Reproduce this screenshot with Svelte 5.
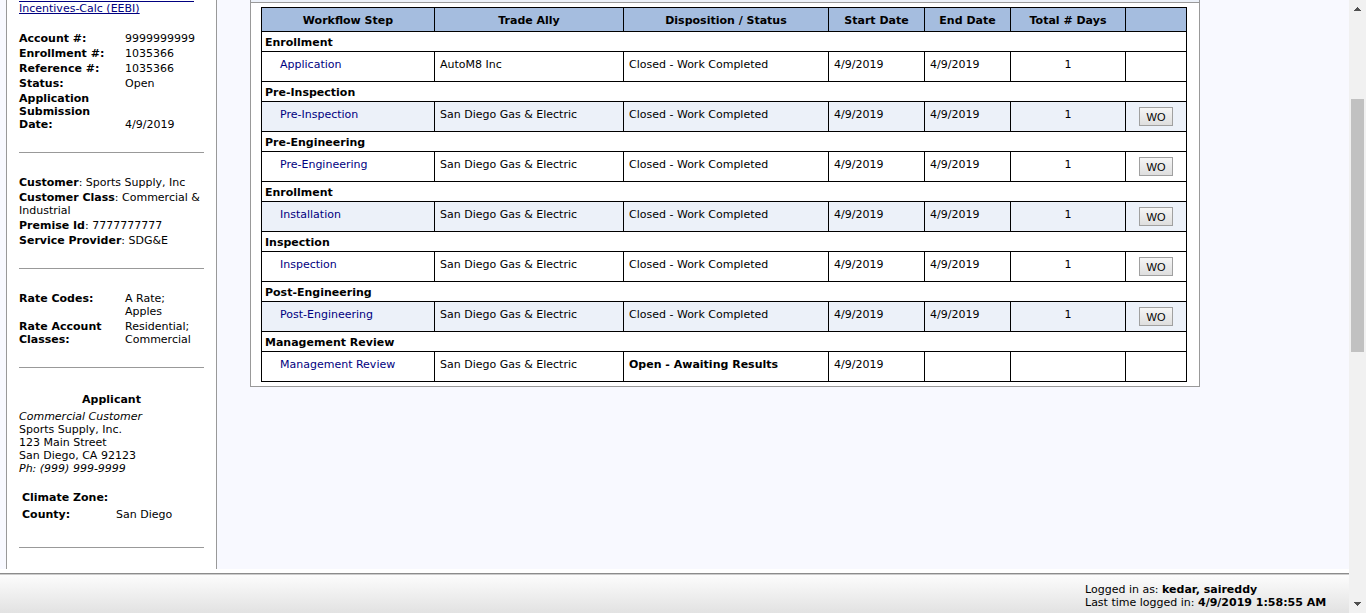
<script>
  const account = [
    ['Account #:', '9999999999'],
    ['Enrollment #:', '1035366'],
    ['Reference #:', '1035366'],
    ['Status:', 'Open'],
    ['Application Submission Date:', '4/9/2019']
  ];
  const customer = [
    ['Customer', 'Sports Supply, Inc'],
    ['Customer Class', 'Commercial & Industrial'],
    ['Premise Id', '7777777777'],
    ['Service Provider', 'SDG&E']
  ];
  const rates = [
    ['Rate Codes:', 'A Rate; Apples'],
    ['Rate Account Classes:', 'Residential; Commercial']
  ];
  const columns = [
    { title: 'Workflow Step', width: 173 },
    { title: 'Trade Ally', width: 189 },
    { title: 'Disposition / Status', width: 205 },
    { title: 'Start Date', width: 96 },
    { title: 'End Date', width: 86 },
    { title: 'Total # Days', width: 115 },
    { title: '', width: 61 }
  ];
  const utility = 'San Diego Gas & Electric';
  const done = 'Closed - Work Completed';
  const day = '4/9/2019';
  const steps = [
    { group: 'Enrollment', step: 'Application', ally: 'AutoM8 Inc', status: done, end: day, days: 1 },
    { group: 'Pre-Inspection', step: 'Pre-Inspection', ally: utility, status: done, end: day, days: 1, wo: true },
    { group: 'Pre-Engineering', step: 'Pre-Engineering', ally: utility, status: done, end: day, days: 1, wo: true },
    { group: 'Enrollment', step: 'Installation', ally: utility, status: done, end: day, days: 1, wo: true },
    { group: 'Inspection', step: 'Inspection', ally: utility, status: done, end: day, days: 1, wo: true },
    { group: 'Post-Engineering', step: 'Post-Engineering', ally: utility, status: done, end: day, days: 1, wo: true },
    { group: 'Management Review', step: 'Management Review', ally: utility, status: 'Open - Awaiting Results', open: true, end: '', days: '' }
  ];
</script>

<div class="window">
  <div class="page">
    <div class="content">
      <aside class="sidebar">
        <a class="program" href="#program">Incentives-Calc (EEBI)</a>

        <dl class="facts account">
          {#each account as [name, value]}
            <dt>{name}</dt>
            <dd>{value}</dd>
          {/each}
        </dl>
        <hr />

        <div class="customer">
          {#each customer as [name, value]}
            <p><b>{name}</b>: {value}</p>
          {/each}
        </div>
        <hr />

        <dl class="facts">
          {#each rates as [name, value]}
            <dt>{name}</dt>
            <dd>{value}</dd>
          {/each}
        </dl>
        <hr />

        <h2>Applicant</h2>
        <address>
          <i>Commercial Customer</i>
          <span>Sports Supply, Inc.</span>
          <span>123 Main Street</span>
          <span>San Diego, CA 92123</span>
          <i>Ph: (999) 999-9999</i>
        </address>
        <dl class="location">
          <dt>Climate Zone:</dt>
          <dd></dd>
          <dt>County:</dt>
          <dd>San Diego</dd>
        </dl>
        <hr />
      </aside>

      <main class="panel">
        <div class="bar"></div>
        <div class="body">
          <table>
            <colgroup>
              {#each columns as column}
                <col style:width="{column.width}px" />
              {/each}
            </colgroup>
            <thead>
              <tr>
                {#each columns as column}
                  <th scope="col">{column.title}</th>
                {/each}
              </tr>
            </thead>
            <tbody>
              {#each steps as row, i}
                <tr class="group">
                  <th colspan="7" scope="rowgroup">{row.group}</th>
                </tr>
                <tr class="step" class:shaded={i % 2 === 1}>
                  <td class="name"><a href="#step">{row.step}</a></td>
                  <td>{row.ally}</td>
                  <td class:open={row.open}>{row.status}</td>
                  <td>{day}</td>
                  <td>{row.end}</td>
                  <td class="days">{row.days}</td>
                  <td class="action">
                    {#if row.wo}<button type="button">WO</button>{/if}
                  </td>
                </tr>
              {/each}
            </tbody>
          </table>
        </div>
      </main>
    </div>

    <footer>
      <div class="login">
        <div>Logged in as: <b>kedar, saireddy</b></div>
        <div>Last time logged in: <b>4/9/2019 1:58:55 AM</b></div>
      </div>
    </footer>
  </div>

  <div class="scrollbar" aria-hidden="true">
    <svg width="17" height="17" viewBox="0 0 17 17" shape-rendering="crispEdges"><path d="M8 7h1v1h1v1h1v1h1v1H5v-1h1V9h1V8h1z" fill="#505050" /></svg>
    <div class="track"><div class="thumb"></div></div>
    <svg width="17" height="17" viewBox="0 0 17 17" shape-rendering="crispEdges"><path d="M5 6h7v1h-1v1h-1v1H9v1H8V9H7V8H6V7H5z" fill="#505050" /></svg>
  </div>
</div>

<style>
  :global(body) {
    margin: 0;
  }
  .window {
    display: flex;
    height: 100vh;
    overflow: hidden;
    color: #000;
    font: 11px/13px Verdana, "DejaVu Sans", sans-serif;
  }
  .page {
    flex: 1;
    min-width: 0;
    display: flex;
    flex-direction: column;
    background: #fff;
  }
  .content {
    flex: 1;
    min-height: 0;
    overflow: hidden;
    display: flex;
    align-items: flex-start;
    gap: 33px;
    padding-left: 6px;
    background: #f8f9ff;
  }
  a {
    color: #000080;
    text-decoration: none;
  }
  dl, dd, p, h2 {
    margin: 0;
  }
  dt {
    font-weight: bold;
  }

  .sidebar {
    box-sizing: border-box;
    flex: 0 0 211px;
    align-self: stretch;
    padding: 0 12px;
    border: solid #999;
    border-width: 0 1px;
    background: #fff;
  }
  .program {
    display: block;
    padding-top: 1px;
    text-decoration: underline;
  }
  .program::before {
    content: "";
    display: block;
    width: 175px;
    height: 1px;
    background: #000080;
  }
  .facts {
    display: grid;
    grid-template-columns: 106px 1fr;
  }
  .facts dt,
  .facts dd,
  .customer p {
    padding: 1px 0;
  }
  .account {
    align-items: end;
    margin-top: 16px;
  }
  .account dt {
    padding-right: 20px;
  }
  .sidebar hr {
    height: 1px;
    margin: 20px 0 22px;
    border: 0;
    background: #999;
  }
  h2 {
    padding-top: 3px;
    font-size: 11px;
    text-align: center;
  }
  address {
    margin-top: 4px;
    font-style: normal;
  }
  address > * {
    display: block;
  }
  .location {
    display: grid;
    grid-template-columns: 94px 1fr;
    margin: 14px 0 24px 3px;
  }
  .location dt,
  .location dd {
    padding: 2px 0;
  }

  .panel {
    box-sizing: border-box;
    flex: 1;
    min-width: 0;
    max-width: 950px;
    border: solid #999;
    border-width: 0 1px 1px;
    background: #fff;
  }
  .bar {
    height: 2px;
    border-bottom: 1px solid #999;
    background: #ecf1f9;
  }
  .body {
    padding: 4px 12px 4px 10px;
  }
  table {
    width: 100%;
    table-layout: fixed;
    border-collapse: collapse;
  }
  th,
  td {
    box-sizing: border-box;
    padding: 0 5px;
    border: 1px solid #000;
    text-align: left;
    vertical-align: top;
  }
  thead th {
    height: 24px;
    padding-top: 1px;
    background: #a5bddf;
    text-align: center;
    vertical-align: middle;
  }
  .group th {
    height: 20px;
    padding: 1px 3px 0;
    vertical-align: middle;
  }
  .step td {
    height: 30px;
    padding-top: 6px;
  }
  .step.shaded td {
    background: #ecf1f9;
  }
  .step .name {
    padding-left: 18px;
  }
  .step .open {
    font-weight: bold;
  }
  .step .days {
    text-align: center;
  }
  .step .action {
    padding: 5px 0 0;
    text-align: center;
  }
  button {
    box-sizing: border-box;
    display: block;
    width: 34px;
    height: 19px;
    margin: 0 auto;
    padding: 1px 0 0;
    border: 1px solid #a0a0a0;
    background: linear-gradient(#f6f6f6, #dedede);
    color: #000;
    font: 11px/16px "Liberation Sans", Arial, sans-serif;
  }

  footer {
    margin-top: 4px;
    border-top: 1px solid #8c8c8c;
    box-shadow: inset 0 1px #ccc;
    background: linear-gradient(#fdfdfd, #e2e2e2);
  }
  .login {
    width: 244px;
    margin: 0 20px 0 auto;
    padding: 9px 0 4px;
    white-space: nowrap;
  }

  .scrollbar {
    flex: 0 0 17px;
    display: flex;
    flex-direction: column;
    background: #f1f1f1;
  }
  .track {
    flex: 1;
    padding: 0 2px;
    display: grid;
    grid-template-rows: 82fr 253fr 244fr;
  }
  .thumb {
    grid-row: 2;
    background: #c1c1c1;
  }
</style>
